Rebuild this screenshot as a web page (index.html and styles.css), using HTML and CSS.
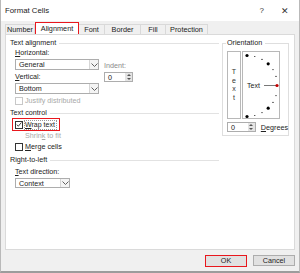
FILE: index.html
```html
<!DOCTYPE html>
<html>
<head>
<meta charset="utf-8">
<link rel="stylesheet" href="styles.css">
</head>
<body>
<div class="dialog">
  <div class="titlebar">
    <span class="title">Format Cells</span>
    <span class="help">?</span>
    <span class="close">&#x2715;</span>
  </div>
  <div class="main">
    <div class="tabs">
      <div class="tab t-number">Number</div>
      <div class="tab active t-align">Alignment</div>
      <div class="tab t-font">Font</div>
      <div class="tab t-border">Border</div>
      <div class="tab t-fill">Fill</div>
      <div class="tab t-prot">Protection</div>
    </div>
    <div class="panel">
      <div class="left">
        <div class="group-head"><span>Text alignment</span><i class="rule"></i></div>
        <div class="align-grid">
          <div class="col-main">
            <div class="label"><u>H</u>orizontal:</div>
            <div class="select wide"><span>General</span><span class="arrow"><svg width="7" height="4" viewBox="0 0 7 4"><path d="M0.5 0.5 L3.5 3.5 L6.5 0.5" fill="none" stroke="#606060" stroke-width="1"/></svg></span></div>
            <div class="label"><u>V</u>ertical:</div>
            <div class="select wide"><span>Bottom</span><span class="arrow"><svg width="7" height="4" viewBox="0 0 7 4"><path d="M0.5 0.5 L3.5 3.5 L6.5 0.5" fill="none" stroke="#606060" stroke-width="1"/></svg></span></div>
          </div>
          <div class="col-indent">
            <div class="label dim">Indent:</div>
            <div class="spin"><span>0</span><span class="spin-btns"><i class="up"></i><i class="down"></i></span></div>
          </div>
        </div>
        <div class="check disabled first"><span class="box"></span><span>Justify distributed</span></div>
        <div class="group-head"><span>Text control</span><i class="rule"></i></div>
        <div class="check wrap"><span class="box checked"><svg width="7" height="7" viewBox="0 0 7 7"><path d="M0.8 3.6 L2.7 5.5 L6.3 1.2" fill="none" stroke="#222" stroke-width="1"/></svg></span><span class="focus"><u>W</u>rap text</span></div>
        <div class="check disabled"><span class="box hidden"></span><span>Shrin<u>k</u> to fit</span></div>
        <div class="check"><span class="box"></span><span><u>M</u>erge cells</span></div>
        <div class="group-head rtl"><span>Right-to-left</span><i class="rule"></i></div>
        <div class="label dir"><u>T</u>ext direction:</div>
        <div class="select narrow"><span>Context</span><span class="arrow"><svg width="7" height="4" viewBox="0 0 7 4"><path d="M0.5 0.5 L3.5 3.5 L6.5 0.5" fill="none" stroke="#606060" stroke-width="1"/></svg></span></div>
      </div>
      <div class="orientation">
        <div class="orient-title">Orientation</div>
        <div class="orient-boxes">
          <div class="vtext"><span>T</span><span>e</span><span>x</span><span>t</span></div>
          <div class="dial">
            <svg width="37" height="68" viewBox="0 0 37 68">
              <g fill="#000">
                <circle cx="4.0" cy="3.5" r="1.6"/>
                <circle cx="11.8" cy="4.5" r="0.6"/>
                <circle cx="19.0" cy="7.4" r="0.6"/>
                <circle cx="25.2" cy="11.8" r="1.6"/>
                <circle cx="30.0" cy="17.6" r="0.6"/>
                <circle cx="33.0" cy="24.4" r="0.6"/>
                <circle cx="25.2" cy="56.2" r="1.6"/>
                <circle cx="30.0" cy="50.4" r="0.6"/>
                <circle cx="33.0" cy="43.6" r="0.6"/>
                <circle cx="19.0" cy="60.6" r="0.6"/>
                <circle cx="11.8" cy="63.5" r="0.6"/>
                <circle cx="4.0" cy="64.5" r="1.6"/>
              </g>
              <line x1="21" y1="33.5" x2="33" y2="33.5" stroke="#555" stroke-width="0.8"/>
              <circle cx="34" cy="33.5" r="1.6" fill="#c00000"/>
              <text x="4" y="36" font-size="7" font-family="Liberation Sans, sans-serif" fill="#222">Text</text>
            </svg>
          </div>
        </div>
        <div class="deg-row">
          <div class="spin small"><span>0</span><span class="spin-btns"><i class="up"></i><i class="down"></i></span></div>
          <span class="deg"><u>D</u>egrees</span>
        </div>
      </div>
    </div>
  </div>
  <div class="footer">
    <div class="btn ok">OK</div>
    <div class="btn">Cancel</div>
  </div>
</div>
</body>
</html>
```

FILE: styles.css
```css
* { box-sizing: border-box; }
html, body { margin: 0; padding: 0; }
body {
  width: 300px;
  height: 273px;
  overflow: hidden;
  font-family: "Liberation Sans", Arial, sans-serif;
  font-size: 7.2px;
  color: #1a1a1a;
  background: #fff;
  white-space: nowrap;
}
u { text-decoration: underline; text-underline-offset: 1px; }
.dialog {
  width: 300px;
  height: 273px;
  background: #f0f0f0;
  border-left: 1px solid #b9b9b9;
  border-right: 1px solid #b9b9b9;
  border-bottom: 2px solid #9c9c9c;
  display: flex;
  flex-direction: column;
}
.titlebar {
  height: 21px;
  flex: none;
  background: #fff;
  display: flex;
  align-items: center;
  padding: 0 4px 0 4px;
}
.title { font-size: 7.8px; color: #222; flex: 1; }
.help { font-size: 8px; color: #333; margin-right: 17px; }
.close { font-size: 9px; color: #333; margin-right: 6px; }
.main {
  padding: 1px 4px 0 4px;
  display: flex;
  flex-direction: column;
}
.tabs {
  display: flex;
  height: 12px;
  align-items: flex-end;
}
.tab {
  height: 10px;
  line-height: 9px;
  padding: 0;
  border: 1px solid #d9d9d9;
  border-bottom: none;
  border-left: none;
  background: #f0f0f0;
  color: #222;
  text-align: center;
  font-size: 7.3px;
}
.t-number { width: 30px; border-left: 1px solid #d9d9d9; }
.t-align { width: 44px; }
.t-font { width: 26px; }
.t-border { width: 36px; }
.t-fill { width: 25px; }
.t-prot { width: 42px; }
.tab.active {
  height: 12px;
  line-height: 11px;
  background: #fff;
  border: 1.5px solid #e8171d;
  border-bottom: none;
}
.panel {
  height: 216px;
  background: #fff;
  border: 1px solid #dadada;
  display: flex;
  padding: 3px 0 0 4px;
}
.left { width: 209px; display: flex; flex-direction: column; }
.group-head {
  display: flex;
  align-items: center;
  height: 10px;
  line-height: 10px;
  color: #222;
}
.group-head .rule {
  flex: 1;
  height: 1px;
  background: #e2e2e2;
  margin-left: 3px;
}
.align-grid { display: flex; padding-left: 5px; }
.col-main { width: 84px; display: flex; flex-direction: column; }
.col-indent { margin-left: 5px; padding-top: 13px; display: flex; flex-direction: column; }
.label { height: 9px; line-height: 9px; color: #222; }
.label.dim { color: #8a8a8a; margin-bottom: 2px; }
.select {
  height: 11px;
  border: 1px solid #adadad;
  display: flex;
  align-items: center;
  justify-content: space-between;
  padding-left: 3px;
  margin-top: 2px;
  margin-bottom: 2px;
  background: #fff;
}
.select.wide { width: 84px; }
.select.narrow { width: 55px; height: 10px; margin-left: 5px; margin-top: 2px; }
.select .arrow {
  width: 9px;
  height: 9px;
  border-left: 1px solid #d6d6d6;
  display: flex;
  align-items: center;
  justify-content: center;
  background: #f4f4f4;
}
.select.narrow .arrow { height: 8px; }
.spin {
  width: 29px;
  height: 10px;
  border: 1px solid #adadad;
  display: flex;
  align-items: center;
  justify-content: space-between;
  padding-left: 3px;
  background: #fff;
}
.spin-btns {
  width: 7px;
  height: 8px;
  display: flex;
  flex-direction: column;
  align-items: center;
  justify-content: space-around;
  background: #e4e4e4;
}
.spin-btns i { width: 0; height: 0; border-left: 2px solid transparent; border-right: 2px solid transparent; }
.spin-btns .up { border-bottom: 2px solid #555; }
.spin-btns .down { border-top: 2px solid #555; }
.check {
  display: flex;
  align-items: center;
  height: 11px;
  padding-left: 5px;
  color: #222;
}
.check.first { margin-top: -1px; }
.check .box {
  width: 8px;
  height: 8px;
  border: 1px solid #333;
  margin-right: 2px;
  display: flex;
  align-items: center;
  justify-content: center;
  background: #fff;
  flex: none;
}
.check.disabled { color: #a8a8a8; }
.check.disabled .box { border-color: #c8c8c8; }
.check .box.hidden { border-color: transparent; }
.check.wrap {
  outline: 1.5px solid #e8171d;
  width: 46px;
  margin-left: 3px;
  padding-left: 2px;
  margin-top: 1px;
}
.check.wrap .box { margin-right: 1px; }
.check.wrap .focus { border: 1px dotted #999; padding: 0 1px 0 0; line-height: 8px; height: 10px; font-size: 7px; }
.check + .group-head { margin-top: 2px; }
.group-head.rtl { margin-top: 3px; }
.label.dir { padding-left: 5px; margin-top: 2px; }
.orientation {
  width: 67px;
  margin-left: 3px;
  height: 93px;
  margin-top: 5px;
  border: 1px solid #dedede;
  border-top: none;
  position: relative;
  display: flex;
  flex-direction: column;
  padding: 0 0 0 4px;
}
.orient-title {
  height: 0;
  position: relative;
  top: -5px;
  color: #222;
  line-height: 10px;
}
.orientation::before {
  content: "";
  position: absolute;
  top: 0;
  left: 42px;
  right: 0;
  height: 1px;
  background: #dedede;
}
.orientation::after {
  content: "";
  position: absolute;
  top: 0;
  left: 0;
  width: 3px;
  height: 1px;
  background: #dedede;
}
.orient-boxes { display: flex; margin-top: 8px; height: 68px; }
.vtext {
  width: 14px;
  border: 1px solid #b8b8b8;
  display: flex;
  flex-direction: column;
  align-items: center;
  justify-content: center;
  line-height: 8.5px;
  font-size: 7px;
  color: #333;
}
.dial {
  width: 38px;
  margin-left: 1px;
  border: 1px solid #b8b8b8;
}
.dial svg { display: block; }
.deg-row { display: flex; align-items: center; margin-top: 3px; }
.spin.small { width: 30px; }
.deg { margin-left: 5px; color: #222; }
.footer {
  flex: 1;
  display: flex;
  justify-content: flex-end;
  align-items: flex-start;
  padding: 5px 4px 0 0;
  gap: 6px;
}
.btn {
  width: 42px;
  height: 11px;
  line-height: 9px;
  border: 1px solid #adadad;
  background: #e1e1e1;
  text-align: center;
  color: #222;
}
.btn.ok { border: 1.5px solid #e8171d; line-height: 9px; height: 12px; margin-top: -0.5px; }
```
